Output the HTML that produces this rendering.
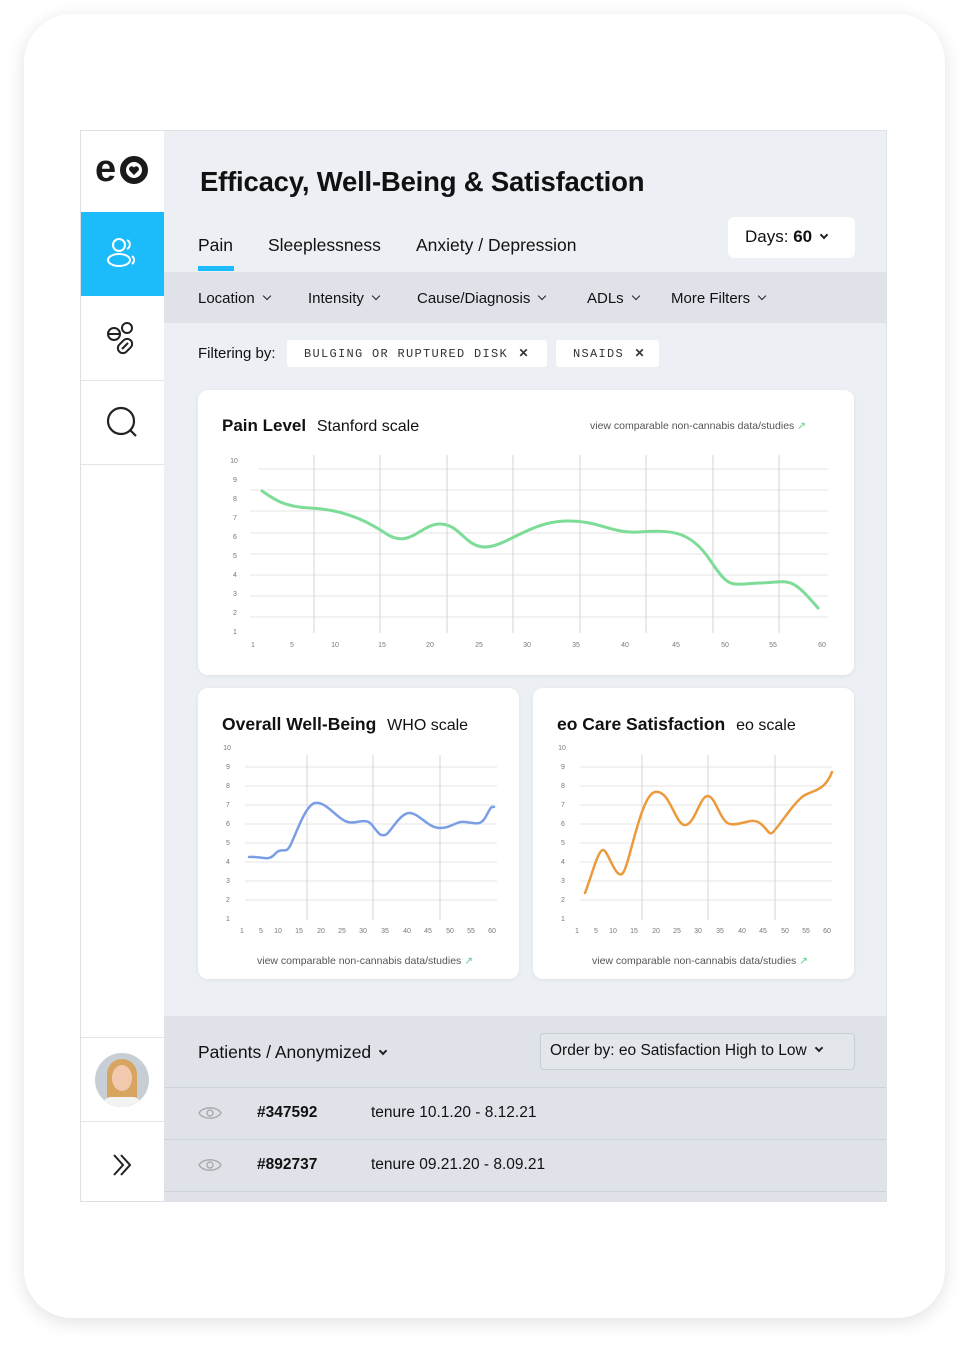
<!DOCTYPE html>
<html><head><meta charset="utf-8"><style>
*{margin:0;padding:0;box-sizing:border-box}
body{width:970px;height:1353px;background:#fff;font-family:"Liberation Sans",sans-serif;color:#111;position:relative;overflow:hidden}
.a{position:absolute}
.card{position:absolute;left:24px;top:14px;width:921px;height:1304px;border-radius:48px;background:#fff;box-shadow:0 4px 18px rgba(0,0,0,.12)}
.frame{position:absolute;left:80px;top:130px;width:807px;height:1072px;background:#eceff3;border:1px solid #dde0e5;overflow:hidden}
.side{position:absolute;left:0;top:0;width:83px;height:1072px;background:#fff}
.sl{position:absolute;left:0;width:83px;height:1px;background:#e3e5e9}
.t{position:absolute;white-space:nowrap}
.chev{display:inline-block;width:6px;height:6px;border-right:1.6px solid #222;border-bottom:1.6px solid #222;transform:rotate(45deg);margin-left:9px;position:relative;top:-4px}
.pc{position:absolute;background:#fff;border-radius:10px;box-shadow:0 1px 4px rgba(0,0,0,.06)}
.chip{position:absolute;background:#fff;border-radius:3px;height:27px;font-family:"Liberation Mono",monospace;font-size:12px;letter-spacing:1.3px;color:#333;line-height:27px;padding-left:17px;white-space:nowrap}
.tick{font-size:7px;fill:#777}
</style></head><body>
<div class="card"></div>
<div class="frame">
 <div class="side">
  <svg class="a" style="left:14px;top:22px" width="54" height="32" viewBox="0 0 54 32"><text x="0" y="28" font-family="Liberation Sans" font-weight="bold" font-size="38" fill="#1a1a1a" letter-spacing="-1">e</text><circle cx="39" cy="17" r="11" fill="none" stroke="#1a1a1a" stroke-width="6"/><path d="M39 22l-4.5-4.5a2.6 2.6 0 0 1 4.5-3a2.6 2.6 0 0 1 4.5 3z" fill="#1a1a1a"/></svg>
  <div class="a" style="left:0;top:81px;width:83px;height:84px;background:#1cbcfb"></div>
  <svg class="a" style="left:24px;top:106px" width="34" height="32" viewBox="0 0 34 32" fill="none" stroke="#fff" stroke-width="2"><circle cx="14" cy="8" r="6"/><ellipse cx="14" cy="23" rx="11" ry="6"/><path d="M22 3a5 5 0 0 1 0 9M27 19a5 5 0 0 1 0 8"/></svg>
  <svg class="a" style="left:24px;top:190px" width="34" height="34" viewBox="0 0 34 34" fill="none" stroke="#222" stroke-width="2"><circle cx="9" cy="13" r="6"/><path d="M3 13h12"/><circle cx="22" cy="7" r="5"/><rect x="15" y="17" width="10" height="16" rx="5" transform="rotate(45 20 25)"/><path d="M17 28l6-6"/></svg>
  <div class="sl" style="top:249px"></div>
  <svg class="a" style="left:25px;top:275px" width="34" height="34" viewBox="0 0 34 34" fill="none" stroke="#222" stroke-width="2.2"><circle cx="15" cy="15" r="13"/><path d="M24 24l6 6"/></svg>
  <div class="sl" style="top:333px"></div>
  <div class="sl" style="top:906px"></div>
  <div class="a" style="left:14px;top:922px;width:54px;height:54px;border-radius:50%;background:#c7ced6;overflow:hidden"><div class="a" style="left:12px;top:6px;width:30px;height:48px;border-radius:15px 15px 6px 6px;background:#d8a560"></div><div class="a" style="left:17px;top:12px;width:20px;height:26px;border-radius:50%;background:#f2c9ae"></div><div class="a" style="left:8px;top:44px;width:38px;height:14px;background:#f3f3f3;border-radius:8px 8px 0 0"></div></div>
  <div class="sl" style="top:990px"></div>
  <svg class="a" style="left:31px;top:1022px" width="20" height="24" viewBox="0 0 20 24" fill="none" stroke="#222" stroke-width="2"><path d="M2 2l9 10-9 10M9 2l9 10-9 10"/></svg>
 </div>
 <div class="t" style="left:119px;top:35px;font-size:27.5px;font-weight:bold;letter-spacing:-.2px">Efficacy, Well-Being &amp; Satisfaction</div>
 <div class="t" style="left:117px;top:104px;font-size:17.5px">Pain</div>
 <div class="a" style="left:117px;top:135px;width:36px;height:5px;background:#1cbcfb"></div>
 <div class="t" style="left:187px;top:104px;font-size:17.5px">Sleeplessness</div>
 <div class="t" style="left:335px;top:104px;font-size:17.5px">Anxiety / Depression</div>
 <div class="a" style="left:647px;top:86px;width:127px;height:41px;background:#fff;border-radius:6px"></div>
 <div class="t" style="left:664px;top:96px;font-size:17px">Days: <b>60</b><span class="chev" style="border-width:2px"></span></div>
 <div class="a" style="left:83px;top:141px;width:724px;height:51px;background:#dfe3e9"></div>
 <div class="t" style="left:117px;top:159px;font-size:15px">Location<span class="chev"></span></div>
 <div class="t" style="left:227px;top:159px;font-size:15px">Intensity<span class="chev"></span></div>
 <div class="t" style="left:336px;top:159px;font-size:15px">Cause/Diagnosis<span class="chev"></span></div>
 <div class="t" style="left:506px;top:159px;font-size:15px">ADLs<span class="chev"></span></div>
 <div class="t" style="left:590px;top:159px;font-size:15px">More Filters<span class="chev"></span></div>
 <div class="t" style="left:117px;top:214px;font-size:15px">Filtering by:</div>
 <div class="chip" style="left:206px;top:209px;width:260px">BULGING OR RUPTURED DISK <b style="margin-left:2px;font-family:'Liberation Sans'">✕</b></div>
 <div class="chip" style="left:475px;top:209px;width:103px">NSAIDS <b style="margin-left:2px;font-family:'Liberation Sans'">✕</b></div>
 <div class="pc" style="left:117px;top:259px;width:656px;height:285px"></div>
 <div class="pc" style="left:117px;top:557px;width:321px;height:291px"></div>
 <div class="pc" style="left:452px;top:557px;width:321px;height:291px"></div>
 <div class="a" style="left:83px;top:885px;width:724px;height:187px;background:#dfe3e9"></div>
 <div class="t" style="left:117px;top:911px;font-size:17.5px">Patients / Anonymized<span class="chev" style="border-width:2px"></span></div>
 <div class="a" style="left:459px;top:902px;width:315px;height:37px;border:1px solid #c9ced5;border-radius:4px;background:#e3e6eb"></div>
 <div class="t" style="left:469px;top:911px;font-size:15.5px">Order by: eo Satisfaction High to Low<span class="chev" style="border-width:2px"></span></div>
 <div class="a" style="left:83px;top:956px;width:724px;height:1px;background:#cdd2d9"></div>
 <div class="a" style="left:83px;top:1008px;width:724px;height:1px;background:#cdd2d9"></div>
 <div class="a" style="left:83px;top:1060px;width:724px;height:1px;background:#cdd2d9"></div>
 <svg class="a" style="left:117px;top:973px" width="24" height="18" viewBox="0 0 24 18" fill="none" stroke="#aaa" stroke-width="1.4"><path d="M1 9C5 2 19 2 23 9C19 16 5 16 1 9Z"/><circle cx="12" cy="9" r="3"/></svg>
 <svg class="a" style="left:117px;top:1025px" width="24" height="18" viewBox="0 0 24 18" fill="none" stroke="#aaa" stroke-width="1.4"><path d="M1 9C5 2 19 2 23 9C19 16 5 16 1 9Z"/><circle cx="12" cy="9" r="3"/></svg>
 <div class="t" style="left:176px;top:973px;font-size:15.5px;font-weight:bold">#347592</div>
 <div class="t" style="left:290px;top:973px;font-size:15.5px">tenure 10.1.20 - 8.12.21</div>
 <div class="t" style="left:176px;top:1025px;font-size:15.5px;font-weight:bold">#892737</div>
 <div class="t" style="left:290px;top:1025px;font-size:15.5px">tenure 09.21.20 - 8.09.21</div>
</div>
<div class="t" style="left:222px;top:416px;font-size:17px;font-weight:bold">Pain Level <span style="font-weight:normal;font-size:16px;margin-left:6px">Stanford scale</span></div>
<div class="t" style="left:590px;top:420px;font-size:10.5px;color:#555">view comparable non-cannabis data/studies <span style="color:#5cd08a">↗</span></div>
<div class="t" style="left:222px;top:714px;font-size:17.5px;font-weight:bold">Overall Well-Being <span style="font-weight:normal;font-size:16px;margin-left:6px">WHO scale</span></div>
<div class="t" style="left:557px;top:714px;font-size:17.5px;font-weight:bold">eo Care Satisfaction <span style="font-weight:normal;font-size:16px;margin-left:6px">eo scale</span></div>
<div class="t" style="left:257px;top:955px;font-size:10.5px;color:#555">view comparable non-cannabis data/studies <span style="color:#5cd08a">↗</span></div>
<div class="t" style="left:592px;top:955px;font-size:10.5px;color:#555">view comparable non-cannabis data/studies <span style="color:#5cd08a">↗</span></div>
<svg class="a" style="left:0;top:0" width="970" height="1353" font-family="Liberation Sans">
 <g stroke="#e6e6e6" stroke-width="1">
  <path d="M258 469H828M250 490H828M250 511H828M250 533H828M250 554H828M250 575H828M250 596H828M250 617H828"/>
 </g>
 <g stroke="#d4d4d4"><path d="M314 455V633M380 455V633M447 455V633M513 455V633M580 455V633M646 455V633M713 455V633M779 455V633"/></g>
 <g class="tick" text-anchor="middle">
  <text x="234" y="463">10</text><text x="235" y="482">9</text><text x="235" y="501">8</text><text x="235" y="520">7</text><text x="235" y="539">6</text><text x="235" y="558">5</text><text x="235" y="577">4</text><text x="235" y="596">3</text><text x="235" y="615">2</text><text x="235" y="634">1</text>
  <text x="253" y="647">1</text><text x="292" y="647">5</text><text x="335" y="647">10</text><text x="382" y="647">15</text><text x="430" y="647">20</text><text x="479" y="647">25</text><text x="527" y="647">30</text><text x="576" y="647">35</text><text x="625" y="647">40</text><text x="676" y="647">45</text><text x="725" y="647">50</text><text x="773" y="647">55</text><text x="822" y="647">60</text>
 </g>
 <path d="M262 491C275 500 285 507 310 508S360 516 385 533S420 524 440 524S465 547 485 547S530 522 565 521S610 534 640 532S690 530 710 560S730 584 760 583S790 575 818 608" fill="none" stroke="#7ddc97" stroke-width="3" stroke-linecap="round"/>
 <g stroke="#e6e6e6"><path d="M245 767H497M245 786H497M245 805H497M245 824H497M245 843H497M245 862H497M245 881H497M245 900H497M580 767H832M580 786H832M580 805H832M580 824H832M580 843H832M580 862H832M580 881H832M580 900H832"/></g>
 <g stroke="#d4d4d4"><path d="M307 755V920M373 755V920M440 755V920M642 755V920M708 755V920M775 755V920"/></g>
 <g class="tick" text-anchor="middle">
  <text x="227" y="750">10</text><text x="228" y="769">9</text><text x="228" y="788">8</text><text x="228" y="807">7</text><text x="228" y="826">6</text><text x="228" y="845">5</text><text x="228" y="864">4</text><text x="228" y="883">3</text><text x="228" y="902">2</text><text x="228" y="921">1</text>
  <text x="562" y="750">10</text><text x="563" y="769">9</text><text x="563" y="788">8</text><text x="563" y="807">7</text><text x="563" y="826">6</text><text x="563" y="845">5</text><text x="563" y="864">4</text><text x="563" y="883">3</text><text x="563" y="902">2</text><text x="563" y="921">1</text>
  <text x="242" y="933">1</text><text x="261" y="933">5</text><text x="278" y="933">10</text><text x="299" y="933">15</text><text x="321" y="933">20</text><text x="342" y="933">25</text><text x="363" y="933">30</text><text x="385" y="933">35</text><text x="407" y="933">40</text><text x="428" y="933">45</text><text x="450" y="933">50</text><text x="471" y="933">55</text><text x="492" y="933">60</text>
  <text x="577" y="933">1</text><text x="596" y="933">5</text><text x="613" y="933">10</text><text x="634" y="933">15</text><text x="656" y="933">20</text><text x="677" y="933">25</text><text x="698" y="933">30</text><text x="720" y="933">35</text><text x="742" y="933">40</text><text x="763" y="933">45</text><text x="785" y="933">50</text><text x="806" y="933">55</text><text x="827" y="933">60</text>
 </g>
 <path d="M249 857C262 856 268 862 275 854S285 855 290 846S305 805 315 803S335 816 345 821S365 816 372 825S380 836 385 835S400 812 410 813S428 828 440 828S455 821 465 822S480 826 485 818S490 806 494 807" fill="none" stroke="#7a9ee6" stroke-width="2.5" stroke-linecap="round"/>
 <path d="M585 893C592 875 598 850 603 850S615 878 622 874S640 795 655 792S675 825 685 825S700 795 708 796S720 822 730 824S750 818 758 822S768 835 772 833S795 800 805 795S825 790 832 772" fill="none" stroke="#ec9a3c" stroke-width="2.5" stroke-linecap="round"/>
</svg>
</body></html>
